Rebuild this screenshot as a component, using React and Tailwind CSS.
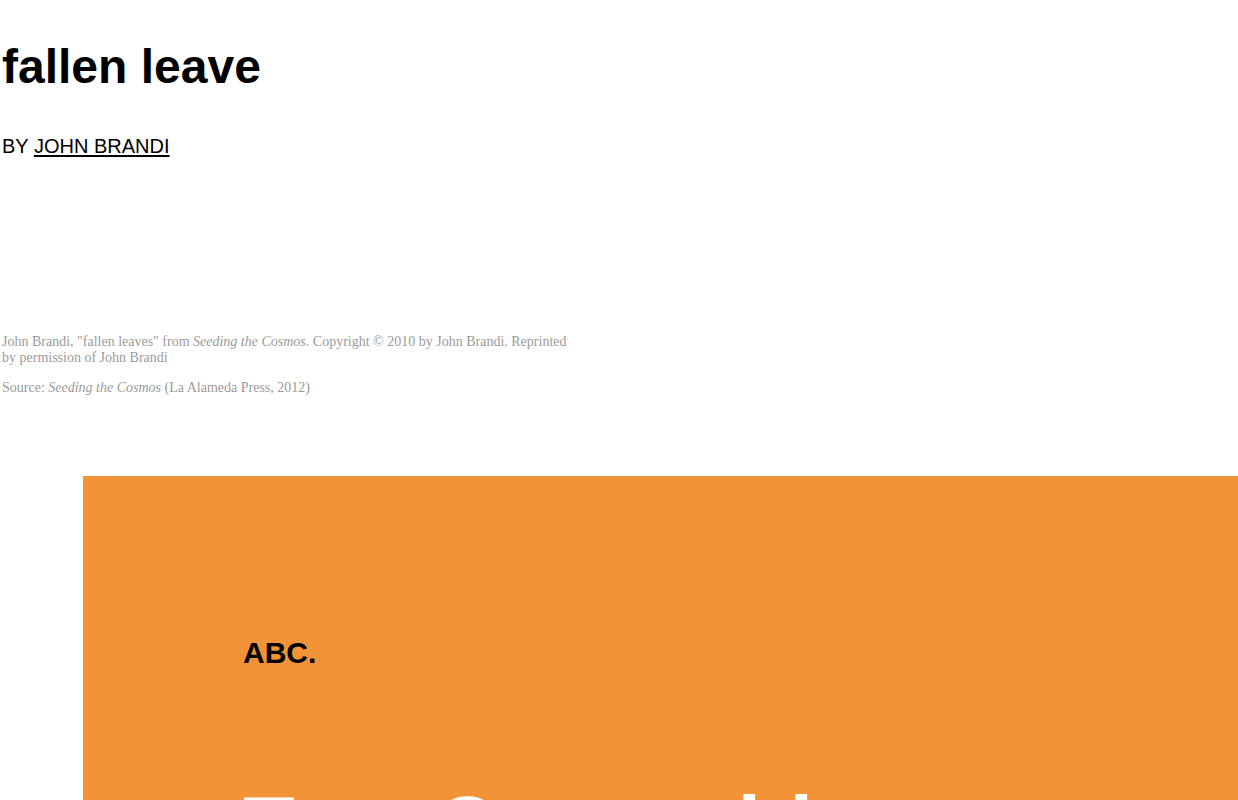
import React from "react";

function Credits() {
  return (
    <div className="mt-[176px] max-w-[572px] font-['Liberation_Serif',serif] text-[14px] leading-[16px] text-[#9a9a9a]">
      <p>
        John Brandi, "fallen leaves" from <em>Seeding the Cosmos</em>. Copyright © 2010 by John Brandi. Reprinted by
        permission of John Brandi
      </p>
      <p className="mt-[14px]">
        Source: <em>Seeding the Cosmos</em> (La Alameda Press, 2012)
      </p>
    </div>
  );
}

export default function App() {
  return (
    <div className="min-h-screen overflow-hidden bg-white font-['Liberation_Sans',Arial,sans-serif] text-black">
      <div className="pl-[2px] pt-[39px]">
        <h1 className="text-[48px] font-bold leading-[55px]">fallen leave</h1>
        <p className="mt-[41px] text-[20px] leading-[23px]">
          BY{" "}
          <a href="#" className="underline decoration-[1.5px] underline-offset-[2px]">
            JOHN BRANDI
          </a>
        </p>
        <Credits />
      </div>

      <section className="ml-[83px] mt-[80px] bg-[#f19336] pl-[160px] pt-[160px] pb-[120px]">
        <p className="text-[30px] font-bold leading-[34px]">ABC.</p>
        <h2 className="mt-[108px] text-[85px] font-bold leading-[98px] text-white">Text Cases title</h2>
      </section>
    </div>
  );
}
